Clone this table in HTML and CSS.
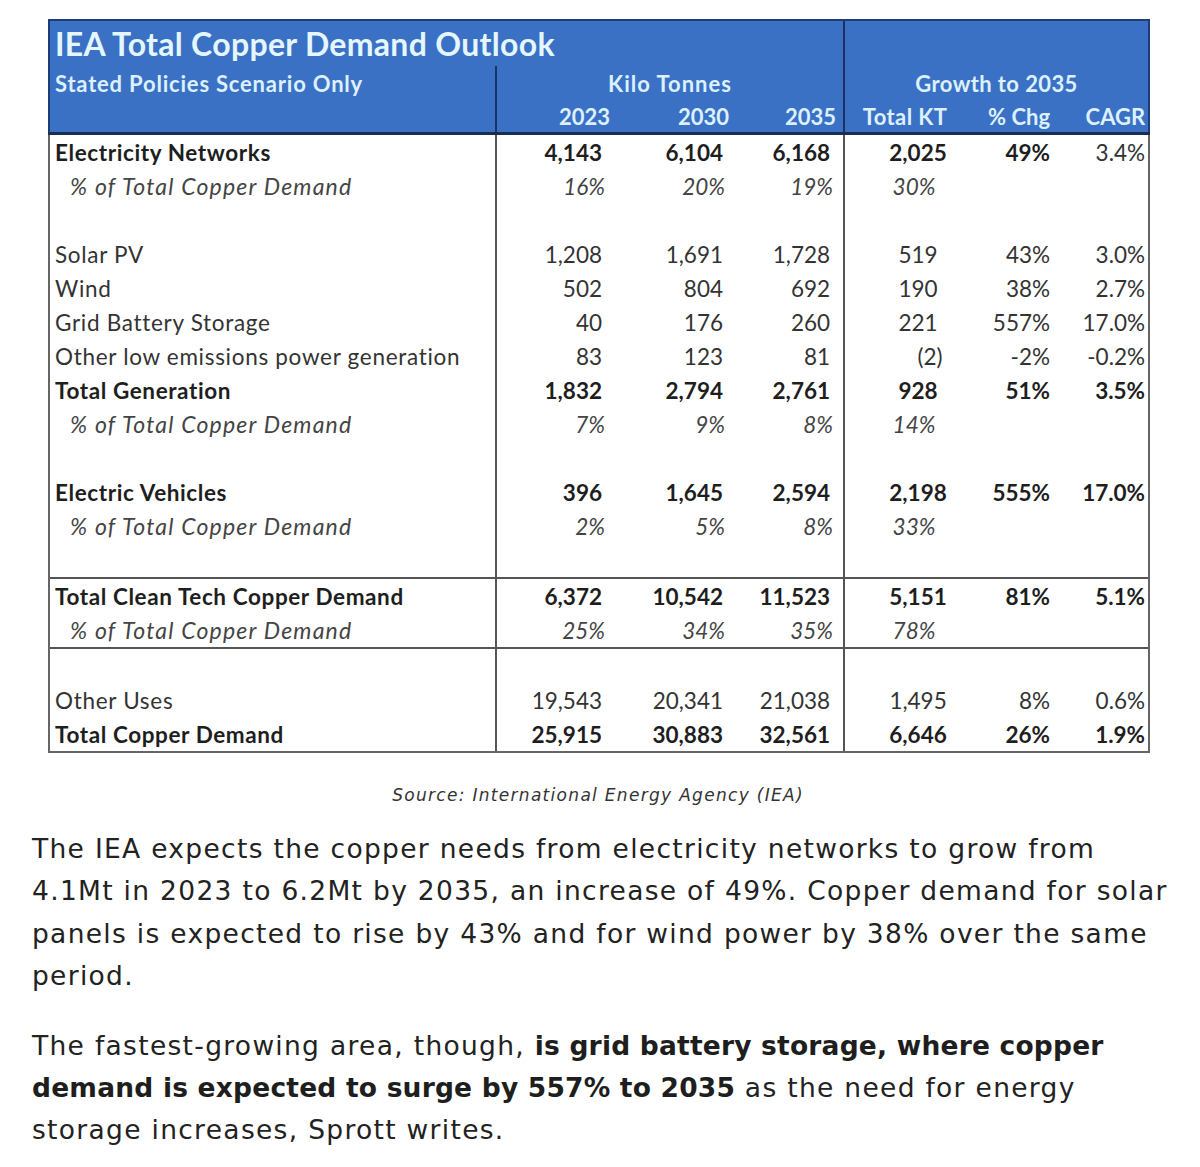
FILE: index.html
```html
<!DOCTYPE html>
<html lang="en">
<head>
<meta charset="utf-8">
<title>IEA Total Copper Demand Outlook</title>
<link rel="stylesheet" href="styles.css">
</head>
<body>
<div class="page">
  <figure class="figure">
    <table class="outlook">
      <colgroup>
        <col class="c-label"><col class="c-y1"><col class="c-y2"><col class="c-y3"><col class="c-kt"><col class="c-chg"><col class="c-cagr">
      </colgroup>
      <thead>
        <tr class="r-title">
          <th colspan="4" class="title first">IEA Total Copper Demand Outlook</th>
          <th colspan="3" class="div last"></th>
        </tr>
        <tr class="r-sub">
          <th class="sub first">Stated Policies Scenario Only</th>
          <th colspan="3" class="grp div">Kilo Tonnes</th>
          <th colspan="3" class="grp grw div last">Growth to 2035</th>
        </tr>
        <tr class="r-years">
          <th class="first"></th>
          <th class="div y1">2023</th>
          <th class="y2">2030</th>
          <th class="y3">2035</th>
          <th class="div kt">Total KT</th>
          <th class="chg">% Chg</th>
          <th class="cagr last">CAGR</th>
        </tr>
      </thead>
      <tbody>
        <tr class="bold">
          <td class="lbl">Electricity Networks</td><td class="n y1">4,143</td><td class="n y2">6,104</td><td class="n y3">6,168</td><td class="n kt">2,025</td><td class="n chg">49%</td><td class="n cagr reg">3.4%</td>
        </tr>
        <tr class="pct">
          <td class="lbl">% of Total Copper Demand</td><td class="n y1">16%</td><td class="n y2">20%</td><td class="n y3">19%</td><td class="n kt">30%</td><td class="n chg"></td><td class="n cagr"></td>
        </tr>
        <tr>
          <td class="lbl"></td><td class="n y1"></td><td class="n y2"></td><td class="n y3"></td><td class="n kt"></td><td class="n chg"></td><td class="n cagr"></td>
        </tr>
        <tr>
          <td class="lbl">Solar PV</td><td class="n y1">1,208</td><td class="n y2">1,691</td><td class="n y3">1,728</td><td class="n kt">519</td><td class="n chg">43%</td><td class="n cagr">3.0%</td>
        </tr>
        <tr>
          <td class="lbl">Wind</td><td class="n y1">502</td><td class="n y2">804</td><td class="n y3">692</td><td class="n kt">190</td><td class="n chg">38%</td><td class="n cagr">2.7%</td>
        </tr>
        <tr>
          <td class="lbl">Grid Battery Storage</td><td class="n y1">40</td><td class="n y2">176</td><td class="n y3">260</td><td class="n kt">221</td><td class="n chg">557%</td><td class="n cagr">17.0%</td>
        </tr>
        <tr>
          <td class="lbl">Other low emissions power generation</td><td class="n y1">83</td><td class="n y2">123</td><td class="n y3">81</td><td class="n kt neg">(2)</td><td class="n chg">-2%</td><td class="n cagr">-0.2%</td>
        </tr>
        <tr class="bold">
          <td class="lbl">Total Generation</td><td class="n y1">1,832</td><td class="n y2">2,794</td><td class="n y3">2,761</td><td class="n kt">928</td><td class="n chg">51%</td><td class="n cagr">3.5%</td>
        </tr>
        <tr class="pct">
          <td class="lbl">% of Total Copper Demand</td><td class="n y1">7%</td><td class="n y2">9%</td><td class="n y3">8%</td><td class="n kt">14%</td><td class="n chg"></td><td class="n cagr"></td>
        </tr>
        <tr>
          <td class="lbl"></td><td class="n y1"></td><td class="n y2"></td><td class="n y3"></td><td class="n kt"></td><td class="n chg"></td><td class="n cagr"></td>
        </tr>
        <tr class="bold">
          <td class="lbl">Electric Vehicles</td><td class="n y1">396</td><td class="n y2">1,645</td><td class="n y3">2,594</td><td class="n kt">2,198</td><td class="n chg">555%</td><td class="n cagr">17.0%</td>
        </tr>
        <tr class="pct">
          <td class="lbl">% of Total Copper Demand</td><td class="n y1">2%</td><td class="n y2">5%</td><td class="n y3">8%</td><td class="n kt">33%</td><td class="n chg"></td><td class="n cagr"></td>
        </tr>
        <tr>
          <td class="lbl"></td><td class="n y1"></td><td class="n y2"></td><td class="n y3"></td><td class="n kt"></td><td class="n chg"></td><td class="n cagr"></td>
        </tr>
        <tr class="bold sep">
          <td class="lbl">Total Clean Tech Copper Demand</td><td class="n y1">6,372</td><td class="n y2">10,542</td><td class="n y3">11,523</td><td class="n kt">5,151</td><td class="n chg">81%</td><td class="n cagr">5.1%</td>
        </tr>
        <tr class="pct">
          <td class="lbl">% of Total Copper Demand</td><td class="n y1">25%</td><td class="n y2">34%</td><td class="n y3">35%</td><td class="n kt">78%</td><td class="n chg"></td><td class="n cagr"></td>
        </tr>
        <tr class="sep">
          <td class="lbl"></td><td class="n y1"></td><td class="n y2"></td><td class="n y3"></td><td class="n kt"></td><td class="n chg"></td><td class="n cagr"></td>
        </tr>
        <tr>
          <td class="lbl">Other Uses</td><td class="n y1">19,543</td><td class="n y2">20,341</td><td class="n y3">21,038</td><td class="n kt">1,495</td><td class="n chg">8%</td><td class="n cagr">0.6%</td>
        </tr>
        <tr class="bold end">
          <td class="lbl">Total Copper Demand</td><td class="n y1">25,915</td><td class="n y2">30,883</td><td class="n y3">32,561</td><td class="n kt">6,646</td><td class="n chg">26%</td><td class="n cagr">1.9%</td>
        </tr>
      </tbody>
    </table>
    <figcaption class="source">Source: International Energy Agency (IEA)</figcaption>
  </figure>

  <div class="article">
    <p>The IEA expects the copper needs from electricity networks to grow from<br>4.1Mt in 2023 to 6.2Mt by 2035, an increase of 49%. Copper demand for solar<br>panels is expected to rise by 43% and for wind power by 38% over the same<br>period.</p>
    <p>The fastest-growing area, though, <strong>is grid battery storage, where copper<br>demand is expected to surge by 557% to 2035</strong> as the need for energy<br>storage increases, Sprott writes.</p>
  </div>
</div>
</body>
</html>
```

FILE: styles.css
```css
html, body {
  margin: 0;
  padding: 0;
  background: #ffffff;
}

.page {
  padding-top: 19px;
}

.figure {
  margin: 0;
}

/* ---------- table ---------- */
.outlook {
  margin-left: 48px;
  width: 1100px;
  table-layout: fixed;
  border-collapse: collapse;
  font-family: Lato, "Liberation Sans", sans-serif;
  color: #2a2a2a;
}

.c-label { width: 447px; }
.c-y1 { width: 117px; }
.c-y2 { width: 120px; }
.c-y3 { width: 111px; }
.c-kt { width: 117px; }
.c-chg { width: 95px; }
.c-cagr { width: 93px; }

.outlook th {
  background: #3b71c4;
  color: #dcf0ff;
  font-weight: 700;
  padding: 0;
  vertical-align: middle;
  white-space: nowrap;
  font-size: 22px;
  letter-spacing: 0.4px;
}

.r-title th {
  height: 45px;
  border-top: 2px solid #1d3d74;
}

.r-sub th { height: 34px; }

.r-years th {
  height: 32px;
  border-bottom: 3px solid #1b2d52;
  text-align: right;
  letter-spacing: 0;
}

.outlook th.first { border-left: 2px solid #1d3d74; }
.outlook th.last { border-right: 2px solid #1d3d74; }
.outlook th.div { border-left: 2px solid #1b3260; }

.outlook th.title {
  text-align: left;
  padding-left: 5px;
  font-size: 32px;
  color: #e4f6ff;
  letter-spacing: 0.3px;
}

.outlook th.sub {
  text-align: left;
  padding-left: 5px;
  letter-spacing: 0.8px;
}

.outlook th.grp {
  text-align: center;
  letter-spacing: 1px;
}
.outlook th.grw { letter-spacing: 0.4px; }

.r-years .y1 { padding-right: 3px; }
.r-years .y2 { padding-right: 4px; }
.r-years .y3 { padding-right: 7px; }
.outlook .r-years .kt { text-align: center; letter-spacing: 0.4px; padding-left: 4px; }
.r-years .chg { padding-right: 6px; }
.r-years .cagr { padding-right: 3px; }

.outlook td {
  height: 34px;
  padding: 0;
  vertical-align: middle;
  font-size: 22.5px;
  white-space: nowrap;
  color: #333333;
}

.outlook td.lbl {
  padding-left: 5px;
  border-left: 2px solid #666666;
  letter-spacing: 0.7px;
}

.outlook td.y1 { border-left: 2px solid #555555; padding-right: 11px; }
.outlook td.y2 { padding-right: 10px; }
.outlook td.y3 { padding-right: 13px; }
.outlook td.kt {
  border-left: 2px solid #555555;
  padding-left: 30px;
}
.outlook td.kt.neg { padding-left: 54px; }
.outlook td.chg { padding-right: 6px; }
.outlook td.cagr {
  padding-right: 3px;
  border-right: 2px solid #666666;
}

.outlook td.n { text-align: right; }
.outlook td.n.kt { text-align: center; }

.bold td {
  font-weight: 700;
  color: #1e1e1e;
}
.outlook .bold td.lbl { letter-spacing: 0.6px; }
.bold td.reg { font-weight: 400; color: #333333; }

.pct td {
  font-style: italic;
  color: #444444;
}
.outlook .pct td.lbl {
  padding-left: 20px;
  font-size: 23px;
  letter-spacing: 1.2px;
}
.pct td.n { padding-right: 8px; }
.pct td.y2 { padding-right: 8px; }
.pct td.y3 { padding-right: 10px; }

.sep td { border-top: 2px solid #555555; }
.end td { border-bottom: 2px solid #666666; }

/* ---------- caption ---------- */
.source {
  margin: 30px 0 0 48px;
  width: 1100px;
  text-align: center;
  font-family: "DejaVu Sans", "Liberation Sans", sans-serif;
  font-style: italic;
  font-size: 17px;
  line-height: 24px;
  letter-spacing: 1.3px;
  color: #333333;
}

/* ---------- article ---------- */
.article {
  margin: 21px 0 0 32px;
  width: 1166px;
  font-family: "DejaVu Sans", "Liberation Sans", sans-serif;
  font-size: 26.5px;
  line-height: 42.4px;
  letter-spacing: 1.3px;
  color: #222222;
}

.article p {
  margin: 0 0 27px 0;
}

.article strong {
  font-weight: 700;
  letter-spacing: 0.2px;
  color: #1e1e1e;
}
```
